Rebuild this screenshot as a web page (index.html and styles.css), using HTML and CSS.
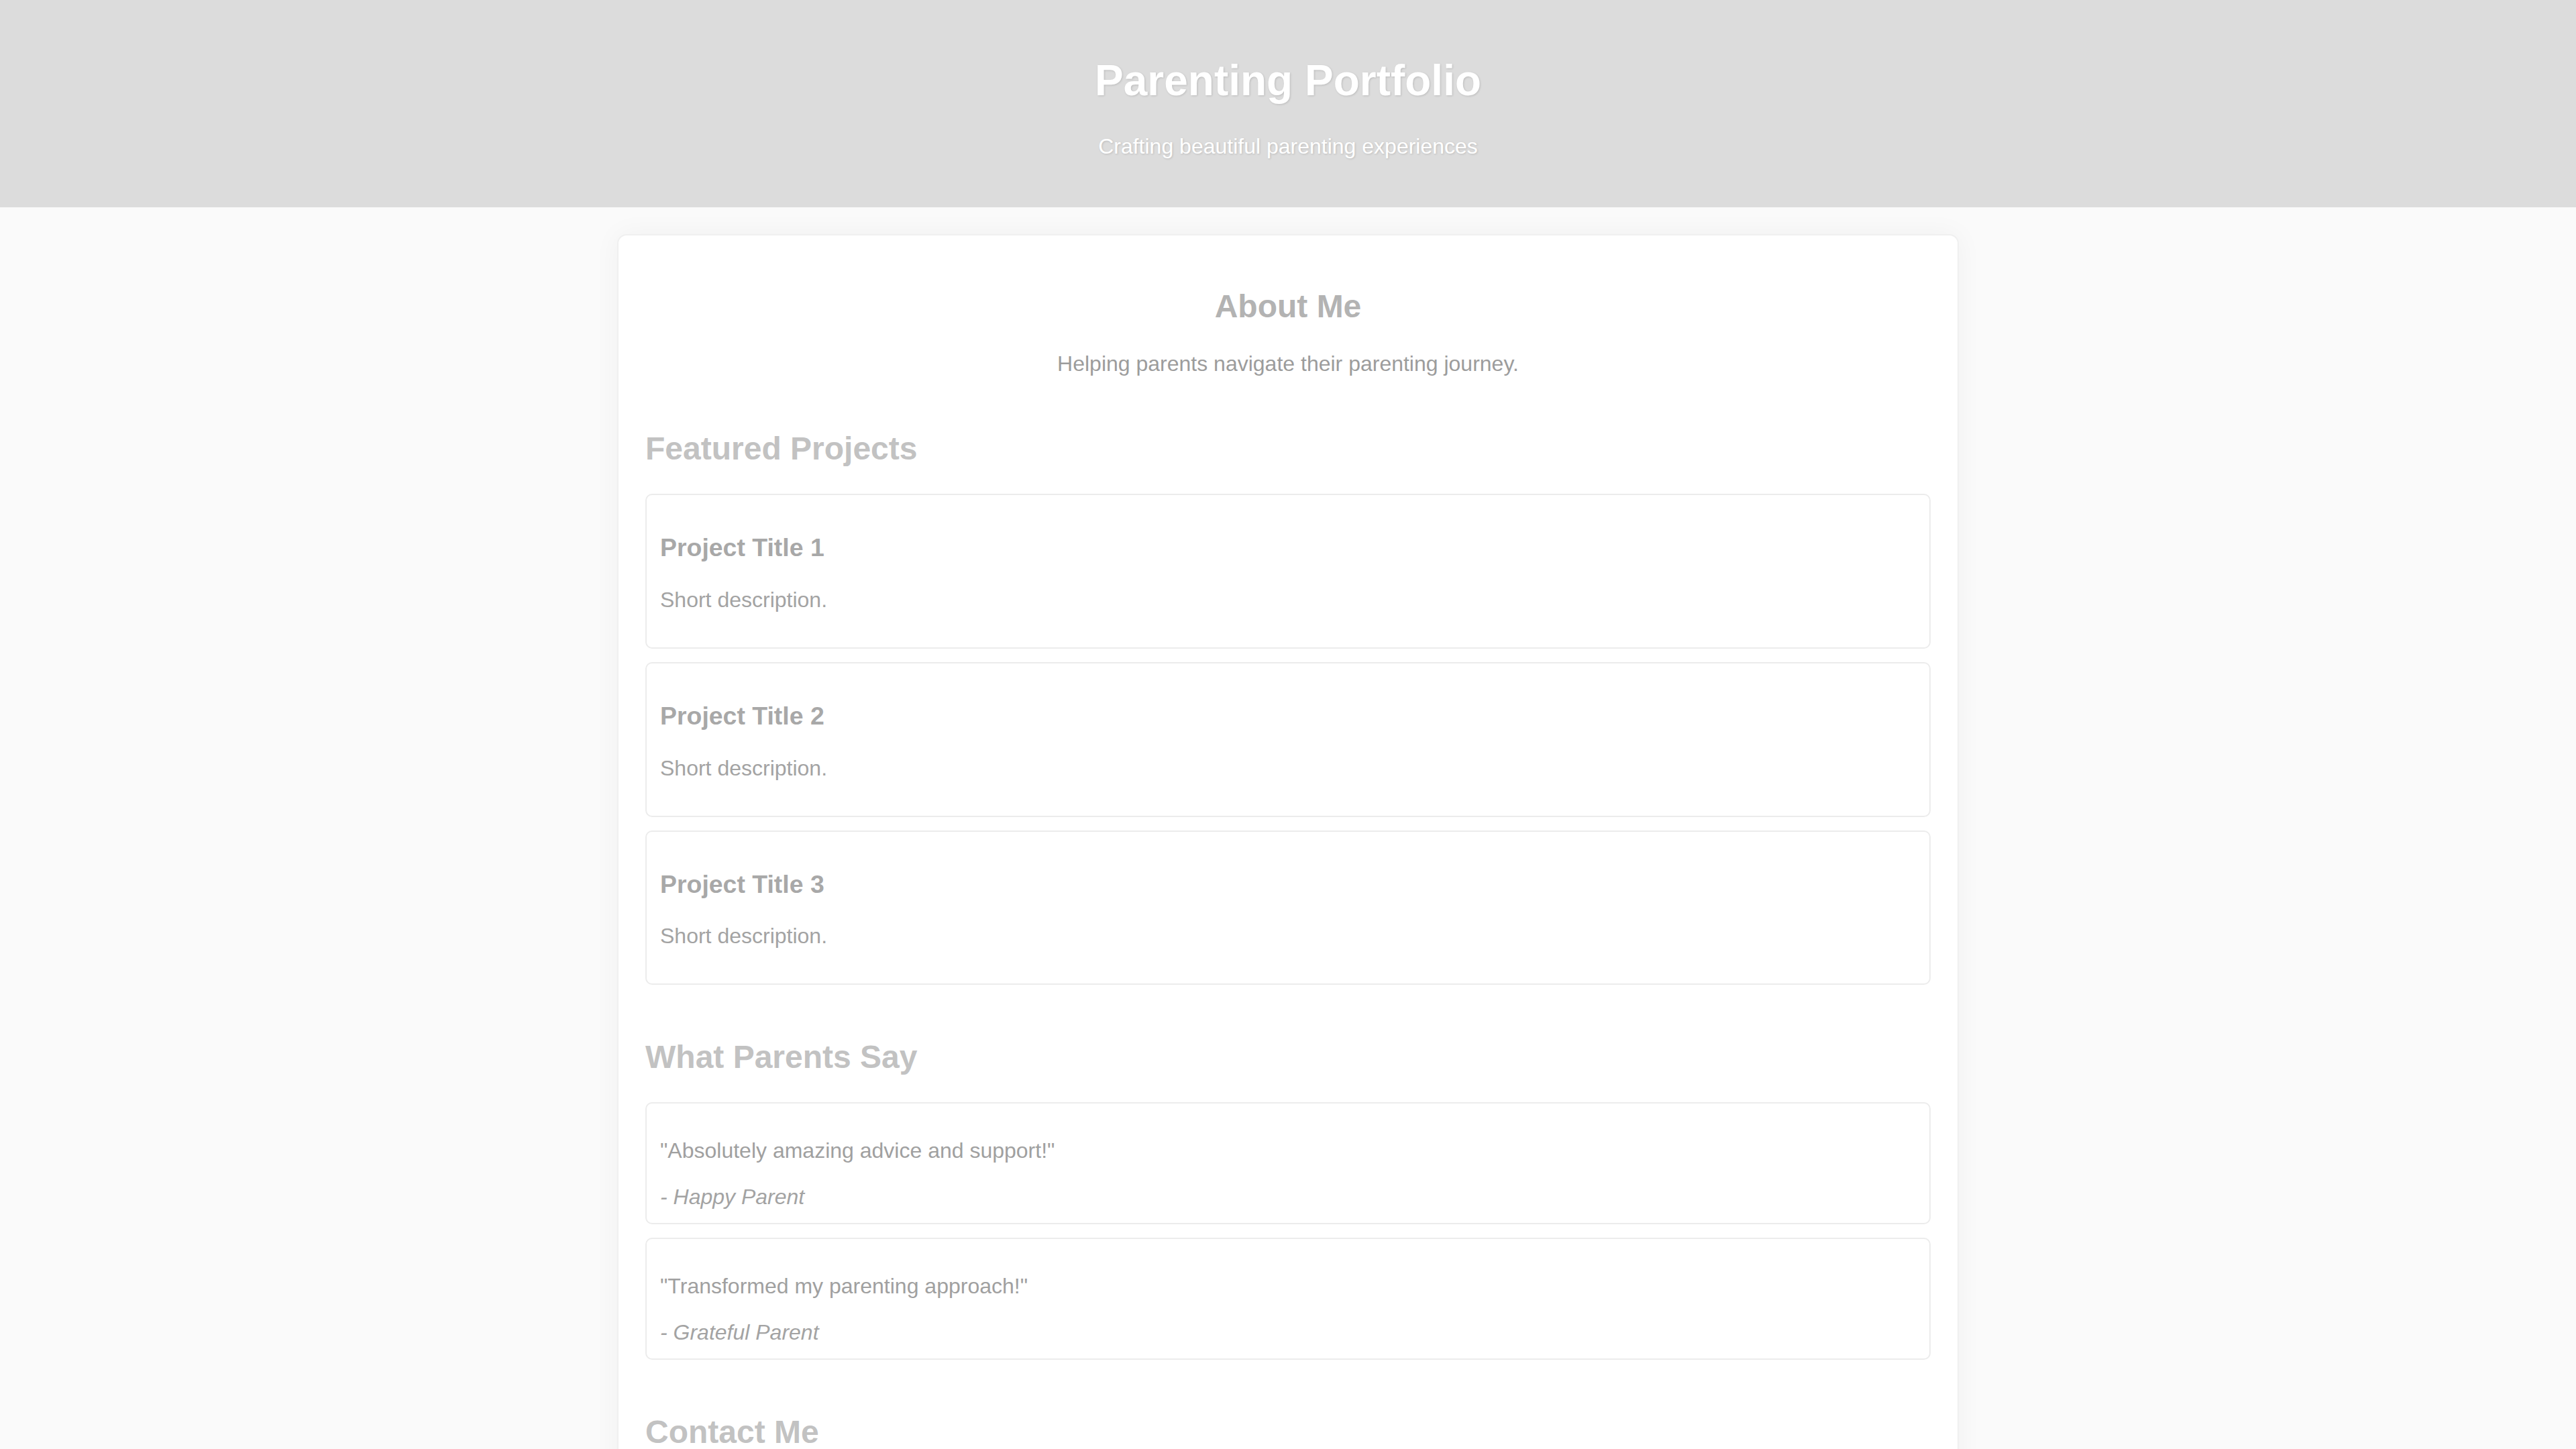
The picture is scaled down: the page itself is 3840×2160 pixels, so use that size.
FILE: index.html
```html
<!DOCTYPE html>
<html lang="en">
<head>
<meta charset="utf-8">
<title>Parenting Portfolio</title>
<link rel="stylesheet" href="styles.css">
</head>
<body>
<header class="site-header">
  <h1 class="site-title">Parenting Portfolio</h1>
  <p class="site-tagline">Crafting beautiful parenting experiences</p>
</header>
<main class="container">
  <section class="section about">
    <h2 class="about-title">About Me</h2>
    <p class="about-text">Helping parents navigate their parenting journey.</p>
  </section>
  <section class="section">
    <h2 class="section-title">Featured Projects</h2>
    <div class="card">
      <h3 class="card-title">Project Title 1</h3>
      <p class="card-text">Short description.</p>
    </div>
    <div class="card">
      <h3 class="card-title">Project Title 2</h3>
      <p class="card-text">Short description.</p>
    </div>
    <div class="card">
      <h3 class="card-title">Project Title 3</h3>
      <p class="card-text">Short description.</p>
    </div>
  </section>
  <section class="section">
    <h2 class="section-title">What Parents Say</h2>
    <div class="card testimonial">
      <p class="quote">"Absolutely amazing advice and support!"</p>
      <cite class="author">- Happy Parent</cite>
    </div>
    <div class="card testimonial">
      <p class="quote">"Transformed my parenting approach!"</p>
      <cite class="author">- Grateful Parent</cite>
    </div>
  </section>
  <section class="section">
    <h2 class="section-title">Contact Me</h2>
    <p class="card-text">Reach out to discuss your parenting journey.</p>
  </section>
</main>
</body>
</html>
```

FILE: styles.css
```css
html, body {
  margin: 0;
  padding: 0;
}

body {
  background: #fafafa;
  font-family: "Liberation Sans", Arial, sans-serif;
  font-size: 32px;
  color: #a3a3a3;
}

.site-header {
  background: #dcdcdc;
  padding: 40px;
  text-align: center;
}

.site-title {
  margin: 0.67em 0;
  font-size: 64px;
  font-weight: bold;
  color: #ffffff;
  text-shadow: 1px 1px 3px rgba(0, 0, 0, 0.15);
}

.site-tagline {
  margin: 32px 0;
  font-size: 32px;
  color: #ffffff;
  text-shadow: 1px 1px 3px rgba(0, 0, 0, 0.15);
}

.container {
  max-width: 1916px;
  margin: 40px auto;
  padding: 40px;
  background: #ffffff;
  border: 2px solid #f0f0f0;
  border-radius: 14px;
  box-shadow: 0 0 40px rgba(0, 0, 0, 0.045);
}

.section {
  display: flow-root;
  margin-bottom: 40px;
}

.section > :last-child {
  margin-bottom: 0;
}

.about {
  text-align: center;
}

.about-title {
  margin: 38px 0 40px;
  font-size: 48px;
  font-weight: bold;
  color: #b3b3b3;
}

.about-text {
  margin: 40px 0 32px;
  color: #9c9c9c;
}

.section-title {
  margin: 40px 0;
  font-size: 48px;
  font-weight: bold;
  color: #c2c2c2;
}

.card {
  background: #ffffff;
  border: 2px solid #ececec;
  border-radius: 10px;
  padding: 20px;
  margin-bottom: 20px;
}

.card-title {
  margin: 37.44px 0;
  font-size: 37.44px;
  font-weight: bold;
  color: #a8a8a8;
}

.card-text {
  margin: 32px 0;
  color: #a3a3a3;
}

.quote {
  margin: 32px 0;
  color: #a0a0a0;
}

.author {
  display: block;
  font-style: italic;
  color: #a3a3a3;
}
```
